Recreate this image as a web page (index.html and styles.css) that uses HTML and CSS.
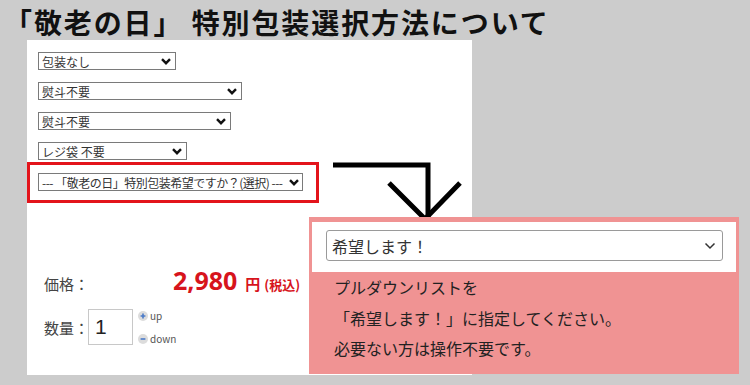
FILE: index.html
```html
<!DOCTYPE html>
<html lang="ja">
<head>
    <meta charset="UTF-8">
    <meta name="viewport" content="width=device-width, initial-scale=1.0">
    <title>「敬老の日」特別包装選択方法について</title>
    <link rel="stylesheet" href="styles.css">
</head>
<body>
    <h1 class="title">「敬老の日」 特別包装選択方法について</h1>

    <div class="stage">
        <div class="panel">
            <div class="sel w1">包装なし
                <svg class="chev" viewBox="0 0 10 7"><path d="M1 1.2 L5 5.2 L9 1.2"/></svg>
            </div>
            <div class="sel w2">熨斗不要
                <svg class="chev" viewBox="0 0 10 7"><path d="M1 1.2 L5 5.2 L9 1.2"/></svg>
            </div>
            <div class="sel w3">熨斗不要
                <svg class="chev" viewBox="0 0 10 7"><path d="M1 1.2 L5 5.2 L9 1.2"/></svg>
            </div>
            <div class="sel w4">レジ袋 不要
                <svg class="chev" viewBox="0 0 10 7"><path d="M1 1.2 L5 5.2 L9 1.2"/></svg>
            </div>
            <div class="marked">
                <div class="sel w5"><span class="sel-text">--- 「敬老の日」特別包装希望ですか？(選択) ---</span>
                    <svg class="chev" viewBox="0 0 10 7"><path d="M1 1.2 L5 5.2 L9 1.2"/></svg>
                </div>
            </div>

            <div class="price-row">
                <span class="label">価格：</span>
                <span class="price">2,980</span>
                <span class="yen">円</span>
                <span class="tax">(税込)</span>
            </div>

            <div class="qty-row">
                <span class="label short">数量：</span>
                <div class="qty-box">1</div>
                <div class="steps">
                    <div class="step">
                        <svg class="step-icon" viewBox="0 0 10 10"><circle cx="5" cy="5" r="5"/><path d="M2.6 5 H7.4 M5 2.6 V7.4"/></svg>
                        <span>up</span>
                    </div>
                    <div class="step">
                        <svg class="step-icon" viewBox="0 0 10 10"><circle cx="5" cy="5" r="5"/><path d="M2.6 5 H7.4"/></svg>
                        <span>down</span>
                    </div>
                </div>
            </div>
        </div>

        <!-- arrow pointing from the marked select to the hint -->
        <svg class="arrow" width="140" height="70" viewBox="0 0 140 70">
            <path d="M0 5 H95 V60" />
            <path d="M56 23 L92 59 L127 23" />
        </svg>

        <div class="hint">
            <div class="hint-top">
                <div class="big-sel">希望します！
                    <svg class="chev-thin" viewBox="0 0 12 8"><path d="M1.5 1.5 L6 6 L10.5 1.5"/></svg>
                </div>
            </div>
            <p>プルダウンリストを</p>
            <p>「希望します！」に指定してください。</p>
            <p>必要ない方は操作不要です。</p>
        </div>
    </div>
</body>
</html>
```

FILE: styles.css
```css
body {
    margin: 0;
    background-color: #cccccc;
    font-family: "Noto Sans CJK JP", "Noto Sans", sans-serif;
    color: #222;
}

.title {
    margin: 0;
    padding: 5px 0 0 4px;
    height: 35px;
    font-size: 28px;
    line-height: 34px;
    font-weight: bold;
    color: #111;
    letter-spacing: 1.9px;
    white-space: nowrap;
}

.stage {
    position: relative;
    height: 349px;
}

.panel {
    margin-left: 27px;
    width: 445px;
    height: 335px;
    padding: 12px 0 0 11px;
    box-sizing: border-box;
    background-color: #fff;
}

.sel {
    display: flex;
    align-items: center;
    justify-content: space-between;
    height: 18px;
    margin-bottom: 12px;
    padding: 0 4px 0 3px;
    box-sizing: border-box;
    border: 1px solid #7a7a7a;
    font-size: 12px;
    color: #333;
    white-space: nowrap;
}

.w1 { width: 138px; }
.w2 { width: 204px; }
.w3 { width: 193px; }
.w4 { width: 149px; }
.w5 { width: 265px; margin-bottom: 0; padding-right: 3px; }

.sel-text {
    font-size: 12px;
    letter-spacing: -0.5px;
}

.chev {
    flex: none;
    width: 10px;
    height: 7px;
    fill: none;
    stroke: #111;
    stroke-width: 2.4;
}

.marked {
    width: 292px;
    height: 41px;
    margin: -10px 0 0 -11px;
    padding: 8px 0 0 8px;
    box-sizing: border-box;
    border: 3px solid #e3141b;
}

.price-row {
    display: flex;
    align-items: baseline;
    margin-top: 60px;
    padding-left: 6px;
    height: 30px;
}

.label {
    width: 129px;
    font-size: 15px;
    color: #444;
    white-space: nowrap;
}

.label.short {
    width: 44px;
}

.price {
    font-family: "Open Sans", sans-serif;
    font-size: 25px;
    font-weight: bold;
    color: #d7141c;
    margin-right: 8px;
}

.yen {
    font-size: 15px;
    font-weight: bold;
    color: #d7141c;
    margin-right: 4px;
}

.tax {
    font-size: 13px;
    font-weight: bold;
    color: #d7141c;
}

.qty-row {
    display: flex;
    align-items: center;
    margin-top: 16px;
    padding-left: 6px;
}

.qty-box {
    width: 45px;
    height: 36px;
    box-sizing: border-box;
    border: 1px solid #c8c8c8;
    padding-left: 6px;
    font-family: "Liberation Sans", Arial, sans-serif;
    font-size: 21px;
    line-height: 33px;
    color: #222;
}

.steps {
    display: flex;
    flex-direction: column;
    gap: 11px;
    margin-left: 5px;
}

.step {
    display: flex;
    align-items: center;
    gap: 2px;
    font-size: 10px;
    color: #555;
    height: 12px;
}

.step-icon {
    width: 10px;
    height: 10px;
}

.step-icon circle {
    fill: #dcdcdc;
}

.step-icon path {
    fill: none;
    stroke: #4a7ac8;
    stroke-width: 1.6;
}

.arrow {
    position: absolute;
    left: 333px;
    top: 120px;
    fill: none;
    stroke: #000;
    stroke-width: 5;
}

.hint {
    position: absolute;
    left: 309px;
    top: 177px;
    width: 430px;
    height: 157px;
    padding: 5px 3px 0 3px;
    box-sizing: border-box;
    background-color: #f09393;
}

.hint-top {
    background-color: #fff;
    height: 50px;
    padding: 8px 13px 0 14px;
    box-sizing: border-box;
}

.big-sel {
    display: flex;
    align-items: center;
    justify-content: space-between;
    height: 31px;
    padding: 0 6px 0 5px;
    box-sizing: border-box;
    border: 1px solid #9a9a9a;
    border-radius: 3px;
    font-size: 16px;
    color: #333;
}

.chev-thin {
    width: 12px;
    height: 8px;
    fill: none;
    stroke: #333;
    stroke-width: 1.5;
}

.hint p {
    margin: 0;
    padding-left: 22px;
    font-size: 16px;
    line-height: 30.5px;
    color: #222;
}
```
